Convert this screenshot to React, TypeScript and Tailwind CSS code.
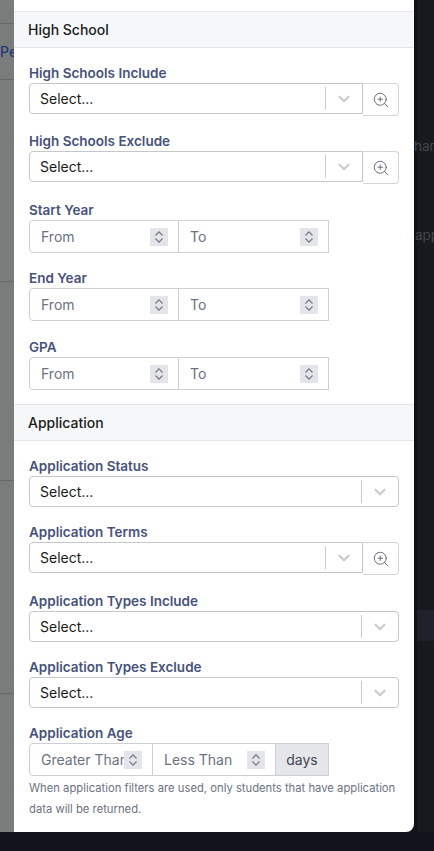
import { ChevronDown, ZoomIn } from "lucide-react";
import type { ReactNode } from "react";

function SectionHeader({ title, className }: { title: string; className: string }) {
  return (
    <div className={`flex h-[37px] items-center border-y border-[#e3e5ea] bg-[#f6f7f9] pl-3.5 text-[14px] font-medium text-[#1a1c20] ${className}`}>
      {title}
    </div>
  );
}

function Field({ label, className, children }: { label: string; className: string; children: ReactNode }) {
  return (
    <div className={`px-[15px] ${className}`}>
      <div className="h-[20px] text-[13.5px] leading-[20px] font-semibold text-[#47527a]">{label}</div>
      {children}
    </div>
  );
}

function Select({ search }: { search?: boolean }) {
  return (
    <div className="flex items-start">
      <div className="flex h-[31px] flex-1 items-center rounded-l-[4px] border border-[#c4c6c8] pl-2.5 text-[14px] text-[#1a1a1a] data-[full=true]:rounded-r-[4px]" data-full={!search}>
        <span className="flex-1">Select...</span>
        <span className="h-[23px] w-px bg-[#cccccc]" />
        <span className="flex w-9 items-center justify-center">
          <ChevronDown size={18} strokeWidth={3} className="text-[#cccccc]" />
        </span>
      </div>
      {search && (
        <button className="flex h-[33px] w-9 items-center justify-center rounded-r-[4px] border border-l-0 border-[#d2d5da] text-[#5b6270]">
          <ZoomIn size={18} strokeWidth={1.2} />
        </button>
      )}
    </div>
  );
}

function Spinner() {
  return (
    <span className="flex h-[18px] w-[18px] shrink-0 items-center justify-center bg-[#e4e5eb] text-[#6f7480]">
      <svg width="18" height="18" viewBox="0 0 18 18" fill="none" stroke="currentColor" strokeWidth="1.1">
        <path d="M5.5 7.5 9 3.8l3.5 3.7" />
        <path d="M5.5 10.5 9 14.2l3.5-3.7" />
      </svg>
    </span>
  );
}

function RangeInput({ left, right }: { left: string; right: string }) {
  return (
    <div className="flex h-[33px] w-[300px] text-[14px] text-[#6b7280]">
      <div className="flex w-[150px] items-center rounded-l-[4px] border border-[#ccd0d6] pr-2.5 pl-[11px]">
        <span className="flex-1 overflow-hidden whitespace-nowrap">{left}</span>
        <Spinner />
      </div>
      <div className="-ml-px flex w-[151px] items-center border border-[#ccd0d6] pr-2.5 pl-[11px]">
        <span className="flex-1 whitespace-nowrap">{right}</span>
        <Spinner />
      </div>
    </div>
  );
}

export default function App() {
  return (
    <div className="flex h-[851px] w-[434px] flex-col overflow-hidden bg-[#13141b] font-['Inter',sans-serif]">
      <div className="flex h-[832px] shrink-0">
        <div className="w-3.5 shrink-0 overflow-hidden bg-[#7a7c7b] pt-[23px]">
          <div className="h-[57px] border-y border-[#686a69] pt-[18px] text-[14px] leading-5 font-medium whitespace-nowrap text-[#1d3a78]">Pe</div>
          <div className="h-[202px] border-b border-[#686a69]" />
          <div className="h-[199px] border-b border-[#686a69]" />
          <div className="h-[213px] border-b border-[#686a69]" />
        </div>
        <div className="w-[400px] shrink-0 rounded-br-[8px] bg-white pt-[11px]">
          <SectionHeader title="High School" className="" />
          <Field label="High Schools Include" className="mt-[15px]">
            <Select search />
          </Field>
          <Field label="High Schools Exclude" className="mt-[15px]">
            <Select search />
          </Field>
          <Field label="Start Year" className="mt-[16px]">
            <RangeInput left="From" right="To" />
          </Field>
          <Field label="End Year" className="mt-[15px]">
            <RangeInput left="From" right="To" />
          </Field>
          <Field label="GPA" className="mt-[16px]">
            <RangeInput left="From" right="To" />
          </Field>
          <SectionHeader title="Application" className="mt-[14px]" />
          <Field label="Application Status" className="mt-[15px]">
            <Select />
          </Field>
          <Field label="Application Terms" className="mt-[15px]">
            <Select search />
          </Field>
          <Field label="Application Types Include" className="mt-[16px]">
            <Select />
          </Field>
          <Field label="Application Types Exclude" className="mt-[15px]">
            <Select />
          </Field>
          <Field label="Application Age" className="mt-[15px]">
            <div className="flex h-[33px] w-[300px] text-[14px] text-[#6b7280]">
              <div className="flex w-[124px] items-center rounded-l-[4px] border border-[#ccd0d6] pr-2.5 pl-[11px]">
                <span className="min-w-0 flex-1 overflow-hidden whitespace-nowrap">Greater Than</span>
                <Spinner />
              </div>
              <div className="-ml-px flex w-[124px] items-center border border-[#ccd0d6] pr-2.5 pl-[11px]">
                <span className="flex-1 whitespace-nowrap">Less Than</span>
                <Spinner />
              </div>
              <div className="-ml-px flex flex-1 items-center justify-center border border-[#ccd0d6] bg-[#e4e6ea] text-[#3f4652]">days</div>
            </div>
            <p className="mt-[2px] text-[11.25px] leading-[21px] whitespace-pre-line text-[#6b7280]">
              {"When application filters are used, only students that have application\ndata will be returned."}
            </p>
          </Field>
        </div>
        <div className="min-w-0 flex-1 border-l-[3px] border-[#111216] bg-[#18191e] text-[13.5px] leading-5 whitespace-nowrap text-[#44464c]">
          <div className="-ml-[3px] overflow-hidden pt-[136px]">han</div>
          <div className="-ml-[2px] mt-[69px] overflow-hidden">app</div>
          <div className="mt-[365px] h-[31px] bg-[#20212b]" />
        </div>
      </div>
    </div>
  );
}
